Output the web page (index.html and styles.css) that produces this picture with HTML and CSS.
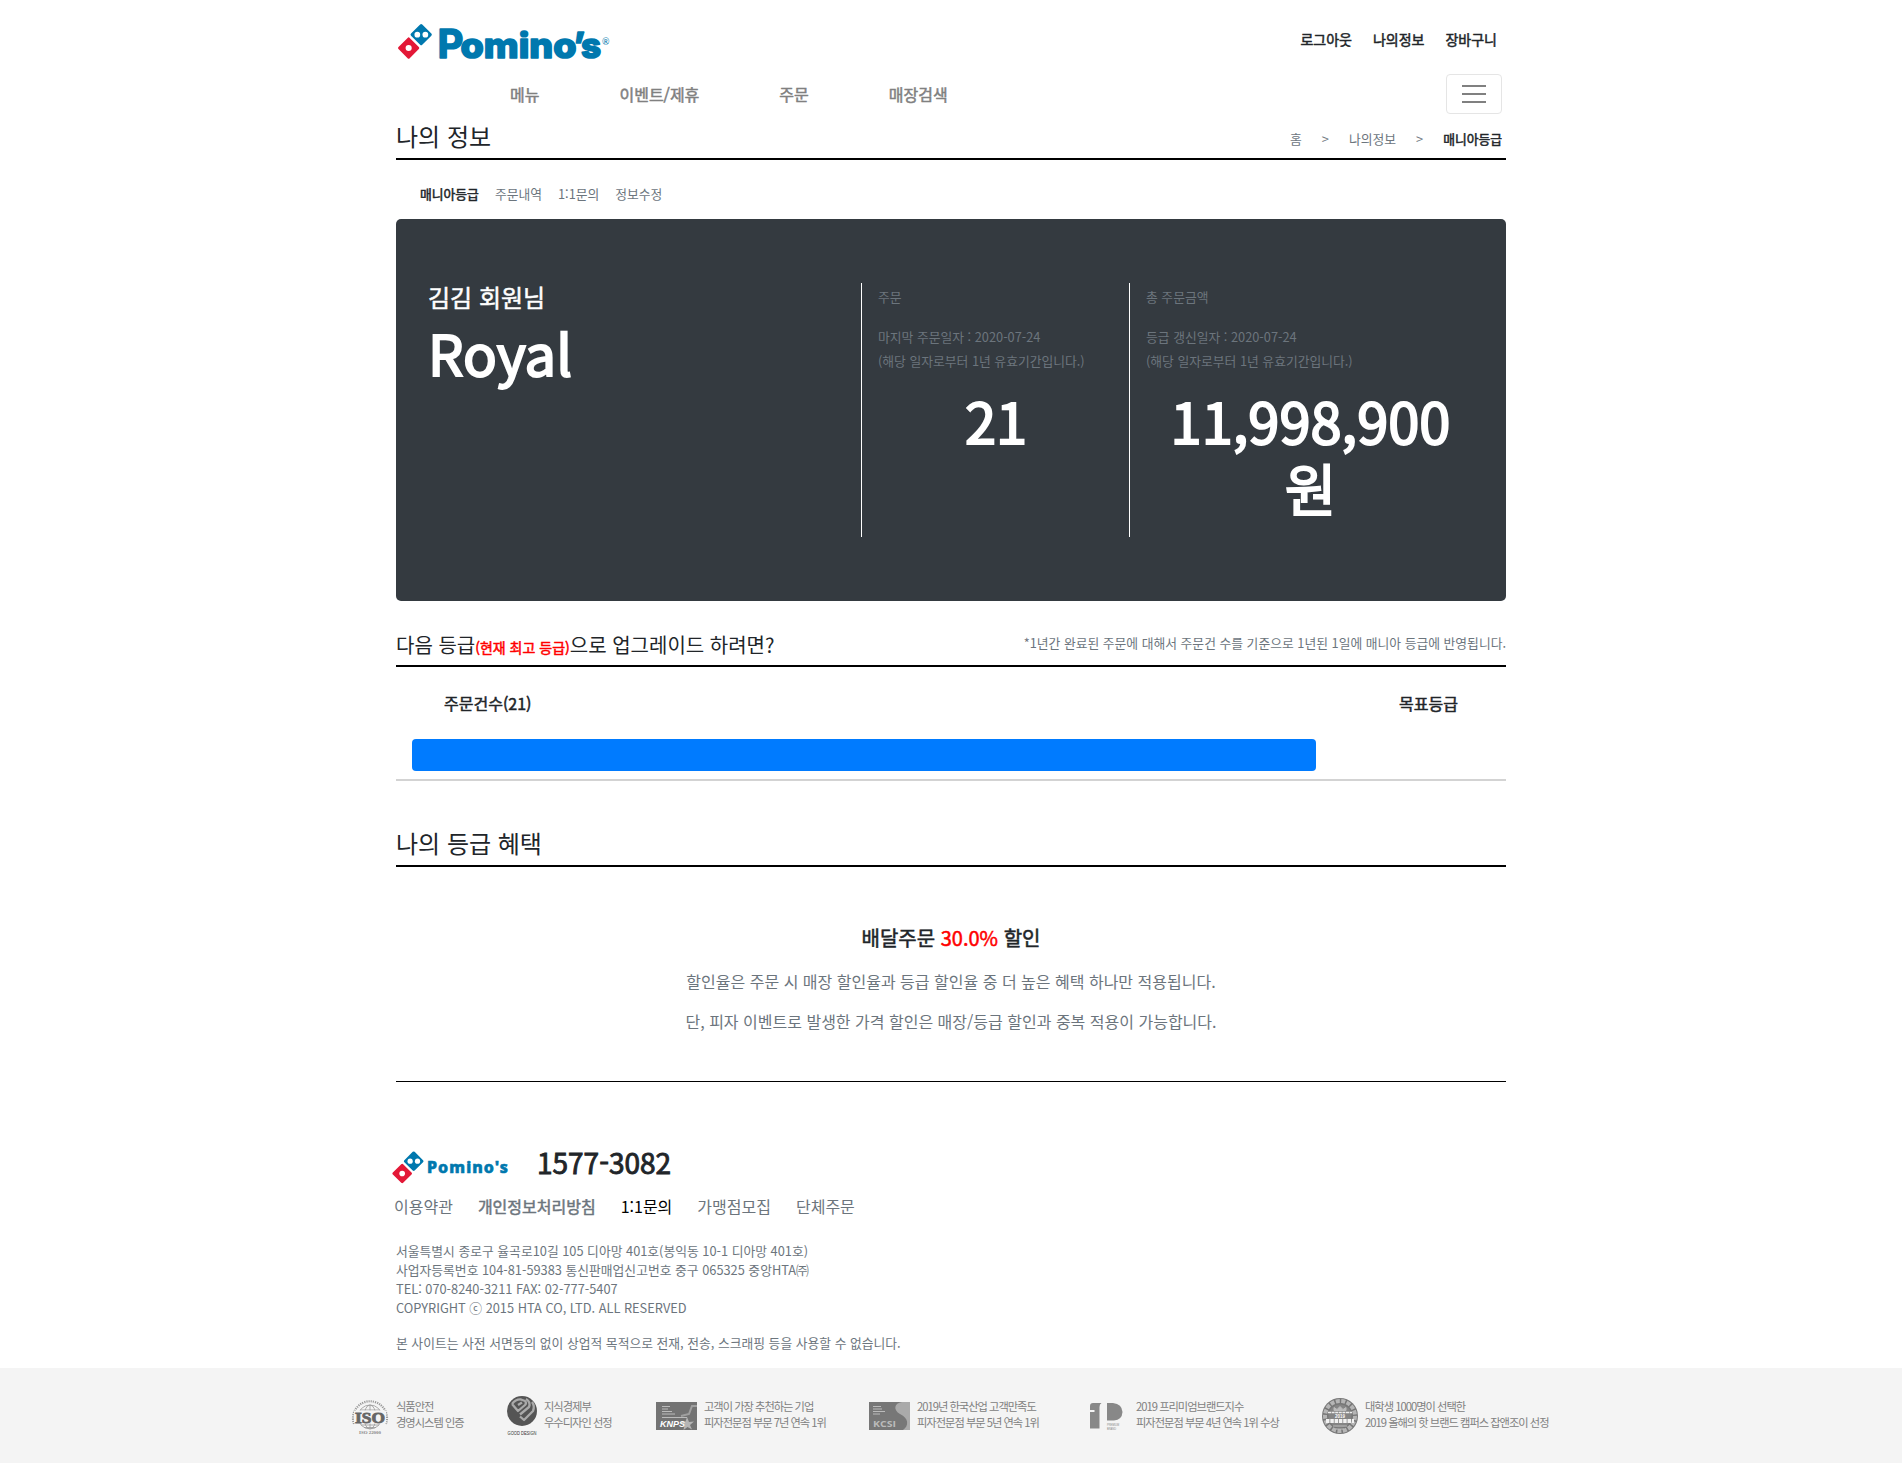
FILE: index.html
```html
<!DOCTYPE html>
<html lang="ko">
<head>
<meta charset="utf-8">
<title>나의 정보</title>
<link rel="stylesheet" href="styles.css">
</head>
<body>
<svg class="defs" width="0" height="0" aria-hidden="true">
  <symbol id="domino" viewBox="0 0 34 35">
    <g transform="rotate(45 23 11)"><rect x="15.4" y="3.600" width="15" height="15" rx="1.4" fill="#0078ae"/></g>
    <circle cx="19.2" cy="11" r="2.7" fill="#fff"/><circle cx="26.8" cy="11" r="2.7" fill="#fff"/>
    <g transform="rotate(45 11 23.7)"><rect x="3.5" y="16.2" width="15" height="15" rx="1.4" fill="#e31837"/></g>
    <circle cx="11" cy="23.7" r="2.9" fill="#fff"/>
  </symbol>
</svg>
<div class="container">
  <header class="top">
    <svg class="logo" width="220" height="50" viewBox="0 0 220 50">
      <use href="#domino" x="0" y="1" width="36" height="37"/>
      <text class="logo-text" y="36"><tspan class="logo-p" x="40.500">P</tspan><tspan x="63.500" textLength="116" lengthAdjust="spacingAndGlyphs">omino</tspan><tspan x="176.500">’</tspan><tspan x="184">s</tspan></text>
      <text class="logo-r" x="205" y="22.500">®</text>
    </svg>
    <nav class="user-links"><a>로그아웃</a><a>나의정보</a><a>장바구니</a></nav>
  </header>
  <div class="navbar">
    <nav class="main-nav"><a>메뉴</a><a>이벤트/제휴</a><a>주문</a><a>매장검색</a></nav>
    <button class="toggler" type="button" aria-label="메뉴 열기"><i></i><i></i><i></i></button>
  </div>
  <div class="page-title">
    <h1>나의 정보</h1>
    <div class="crumbs"><span>홈</span><span>&gt;</span><span>나의정보</span><span>&gt;</span><b>매니아등급</b></div>
  </div>
  <nav class="tabs"><b>매니아등급</b><a>주문내역</a><a>1:1문의</a><a>정보수정</a></nav>

  <section class="card">
    <div class="member"><p class="name">김김 회원님</p><p class="big">Royal</p></div>
    <div class="stat orders">
      <p class="label">주문</p>
      <p>마지막 주문일자 : 2020-07-24<br>(해당 일자로부터 1년 유효기간입니다.)</p>
      <p class="big">21</p>
    </div>
    <div class="stat amount">
      <p class="label">총 주문금액</p>
      <p>등급 갱신일자 : 2020-07-24<br>(해당 일자로부터 1년 유효기간입니다.)</p>
      <p class="big">11,998,900<br>원</p>
    </div>
  </section>

  <div class="upgrade">
    <h2>다음 등급<strong>(현재 최고 등급)</strong>으로 업그레이드 하려면?</h2>
    <span>*1년간 완료된 주문에 대해서 주문건 수를 기준으로 1년된 1일에 매니아 등급에 반영됩니다.</span>
  </div>
  <div class="goal">
    <div class="goal-head"><b>주문건수(21)</b><b>목표등급</b></div>
    <div class="progress"></div>
  </div>

  <h2 class="benefit-title">나의 등급 혜택</h2>
  <section class="benefit">
    <h3>배달주문 <em>30.0%</em> 할인</h3>
    <p>할인율은 주문 시 매장 할인율과 등급 할인율 중 더 높은 혜택 하나만 적용됩니다.</p>
    <p>단, 피자 이벤트로 발생한 가격 할인은 매장/등급 할인과 중복 적용이 가능합니다.</p>
  </section>

  <footer class="footer">
    <div class="contact">
      <svg class="foot-logo" width="120" height="34" viewBox="0 0 120 34">
        <use href="#domino" x="-.5" y="-.5" width="33" height="34"/>
        <text class="foot-logo-text" x="35" y="22" textLength="81" lengthAdjust="spacing">Pomino's</text>
      </svg>
      <span class="phone">1577-3082</span>
    </div>
    <nav class="policies"><a>이용약관</a><b>개인정보처리방침</b><a class="dark">1:1문의</a><a>가맹점모집</a><a>단체주문</a></nav>
    <address>서울특별시 종로구 율곡로10길 105 디아망 401호(봉익동 10-1 디아망 401호)<br>사업자등록번호 104-81-59383 통신판매업신고번호 중구 065325 중앙HTA㈜<br>TEL: 070-8240-3211 FAX: 02-777-5407<br>COPYRIGHT ⓒ 2015 HTA CO, LTD. ALL RESERVED</address>
    <p class="notice">본 사이트는 사전 서면동의 없이 상업적 목적으로 전재, 전송, 스크래핑 등을 사용할 수 없습니다.</p>
  </footer>
</div>

<div class="awards">
  <div class="award a1">
    <svg width="38" height="40" viewBox="0 0 38 40">
      <g fill="none" stroke="#999">
        <path d="M3 28A17 17 0 1 1 35 28" stroke-width="2.2" stroke-dasharray="1.2 1"/>
        <circle cx="19" cy="21" r="12" stroke-width=".8"/><ellipse cx="19" cy="21" rx="6" ry="12" stroke-width=".8"/>
        <path d="M19 9v25M9 14h20M10 29h18M13 31.500h12" stroke-width=".8"/>
      </g>
      <rect x="3" y="14.5" width="32" height="13" fill="#f4f4f4"/>
      <text class="iso" x="4" y="26.500" textLength="30" lengthAdjust="spacingAndGlyphs">ISO</text>
      <rect x="6" y="33.500" width="26" height="6.500" fill="#f4f4f4"/>
      <text class="iso-sub" x="8" y="38" textLength="22" lengthAdjust="spacingAndGlyphs">ISO 22000</text>
    </svg>
    <p>식품안전<br>경영시스템 인증</p>
  </div>
  <div class="award a2">
    <svg width="30" height="42" viewBox="0 0 30 42">
      <circle cx="15" cy="16" r="15" fill="#555"/>
      <g fill="none" stroke="#aaa" stroke-width="2.3" stroke-linejoin="round">
        <path d="M5 9L11 16L18 10Q20 8 18 6L14 4.500Q9 4 5 9"/>
        <path d="M11 10L15 7.500"/>
        <path d="M19 4Q24 7 22 12L13 19.500"/>
        <path d="M25 7Q28 11 26 16L17 25L13 21.500"/>
      </g>
      <text class="gd" x=".5" y="40" textLength="29" lengthAdjust="spacingAndGlyphs">GOOD DESIGN</text>
    </svg>
    <p>지식경제부<br>우수디자인 선정</p>
  </div>
  <div class="award a3">
    <svg width="41" height="28" viewBox="0 0 41 28">
      <rect width="41" height="28" fill="#737373"/>
      <path d="M6 4.5h8M6 7h6M6 9.500h10M6 12h13M6 15.500h25" stroke="#bbb" stroke-width="1"/>
      <path d="M25 14L33 12L36 4H41" fill="none" stroke="#a0a0a0" stroke-width="2"/>
      <path d="M31 15l2 5 5-.5-4 3.500 2 4.500-4.500-2.500-4 3 1-5-4-3 5-.5z" fill="#b5b5b5"/>
      <text class="knps" x="4" y="25" textLength="25" lengthAdjust="spacingAndGlyphs">KNPS</text>
    </svg>
    <p>고객이 가장 추천하는 기업<br>피자전문점 부문 7년 연속 1위</p>
  </div>
  <div class="award a4">
    <svg width="41" height="28" viewBox="0 0 41 28">
      <rect width="41" height="28" fill="#777"/>
      <path d="M41 0H33C25 1 24 8 31 12C40 16 40 24 34 28H41Z" fill="#aaa"/>
      <path d="M4 4.500h8M4 7h9M4 9.500h12M4 12h7" stroke="#bbb" stroke-width="1.200"/>
      <text class="kcsi" x="4" y="25" textLength="23" lengthAdjust="spacingAndGlyphs">KCSI</text>
    </svg>
    <p>2019년 한국산업 고객만족도<br>피자전문점 부문 5년 연속 1위</p>
  </div>
  <div class="award a5">
    <svg width="33" height="28" viewBox="0 0 33 28">
      <path d="M0 4Q0 1 3 1H11.500Q9.500 2 9.500 5V26.500H0V10H4.500V8H0Z" fill="#888"/>
      <path d="M17 1H23Q32 2 32.500 10Q32 18 24 18.500H17Z" fill="#888"/>
      <text class="pb" x="17" y="23.500" textLength="12" lengthAdjust="spacingAndGlyphs">PREMIUM</text>
      <text class="pb" x="17" y="27.500" textLength="9" lengthAdjust="spacingAndGlyphs">BRAND</text>
    </svg>
    <p>2019 프리미엄브랜드지수<br>피자전문점 부문 4년 연속 1위 수상</p>
  </div>
  <div class="award a6">
    <svg width="36" height="36" viewBox="0 0 36 36">
      <circle cx="18" cy="18" r="18" fill="#777"/>
      <circle cx="18" cy="18" r="15" fill="none" stroke="#b5b5b5" stroke-width="4" stroke-dasharray="4 1.500"/>
      <circle cx="18" cy="18" r="11.500" fill="#858585"/>
      <path d="M12 9.500l3 2 3-3 3 3 3-2v3H12zM11 28h14M14 31h8" fill="#bbb" stroke="#bbb"/>
      <path d="M6 14.500H30" stroke="#eee" stroke-width="1.600" stroke-dasharray="3 .6"/>
      <path d="M4 23H32" stroke="#f2f2f2" stroke-width="4" stroke-dasharray="3.500 .8"/>
      <text class="badge" x="13" y="20" textLength="10" lengthAdjust="spacingAndGlyphs">2019</text>
    </svg>
    <p>대학생 1000명이 선택한<br>2019 올해의 핫 브랜드 캠퍼스 잡앤조이 선정</p>
  </div>
</div>
</body>
</html>
```
FILE: styles.css
```css
* { box-sizing: border-box; }
body, h1, h2, h3, p { margin: 0; }
body {
  background: #fff;
  color: #212529;
  font-family: "Noto Sans CJK KR", sans-serif;
  font-size: 16px;
  line-height: 24px;
  white-space: nowrap;
}
/* Emphasis keeps the regular face's widths and thickens its strokes. */
b, strong, h3, .user-links, .main-nav, .name { font-weight: 400; -webkit-text-stroke: .5px currentColor; }
.defs { display: block; }
.container { width: 1110px; height: 1368px; margin: 0 auto; }

.top { height: 72px; display: flex; justify-content: space-between; }
.logo { margin: 22px 0 0 1px; }
.logo-text { font-family: Inter, sans-serif; font-weight: 800; font-size: 35px; fill: #0078ae; stroke: #0078ae; stroke-width: 1.6; stroke-linejoin: round; }
.logo-p { font-size: 40px; font-weight: 700; }
.logo-r { font-family: Lato, sans-serif; font-size: 9px; fill: #0078ae; }
.user-links { display: flex; gap: 21px; padding: 27px 9px 0 0; font-size: 14px; }

.navbar { height: 45px; display: flex; justify-content: space-between; }
.main-nav { display: flex; gap: 80px; padding: 10px 0 0 114px; color: #808080; }
.toggler {
  width: 56px; height: 40px; margin: 2px 4px 0 0; padding: 0;
  display: flex; flex-direction: column; align-items: center; justify-content: center; gap: 6px;
  background: none; border: 1px solid #e5e5e5; border-radius: 4px;
}
.toggler i { width: 24px; height: 2px; background: #808080; }

.page-title { height: 43px; display: flex; justify-content: space-between; border-bottom: 2px solid #000; }
.page-title h1, .benefit-title { font-size: 24px; font-weight: 400; line-height: 38px; }
.crumbs { display: flex; gap: 20px; padding: 10px 4px 0 0; font-size: 12.8px; color: #6c757d; }
.crumbs b, .tabs b { color: #212529; }
.tabs { height: 59px; display: flex; gap: 16px; padding: 22px 0 0 24px; font-size: 12.8px; color: #6c757d; }

.card { height: 382px; display: flex; padding: 64px 16px; border-radius: 5px; background: #343a40; color: #fff; }
.member { width: 449px; padding-left: 16px; }
.name { font-size: 24px; line-height: 28px; }
.big { font-size: 56px; line-height: 67px; -webkit-text-stroke: 2px currentColor; }
.member .big { padding-top: 7px; }
.stat { border-left: 1px solid #fff; padding: 2px 15px 0 16px; font-size: 12.8px; color: #6c757d; }
.stat .label { margin-bottom: 16px; }
.stat .big { margin-top: 13px; text-align: center; color: #fff; }
.orders { width: 268px; }
.amount { width: 361px; }

.upgrade { height: 66px; display: flex; justify-content: space-between; padding-top: 29px; border-bottom: 2px solid #000; }
.upgrade h2 { font-size: 20px; font-weight: 400; line-height: 30px; }
.upgrade strong { font-size: 14px; color: #f00; }
.upgrade span { padding-top: 1px; font-size: 12.8px; color: #6c757d; }
.goal { height: 114px; padding: 24px 16px 0; border-bottom: 2px solid #d3d3d3; }
.goal-head { height: 48px; display: flex; justify-content: space-between; padding: 0 32px; }
.progress { width: 904px; height: 32px; border-radius: 4px; background: #007bff; }

.benefit-title { height: 86px; padding-top: 43px; border-bottom: 2px solid #000; }
.benefit { height: 215px; padding-top: 56px; text-align: center; border-bottom: 1px solid #000; color: #6c757d; }
.benefit h3 { font-size: 20px; line-height: 30px; color: #212529; margin-bottom: 16px; }
.benefit em { font-style: normal; color: #f00; }
.benefit p { margin-bottom: 16px; }

.contact { display: flex; margin: 60px 0 0 -4px; height: 52px; }
.foot-logo { margin-top: 9px; }
.foot-logo-text { font-family: "Noto Sans", sans-serif; font-size: 16px; font-weight: 800; fill: #0078ae; stroke: #0078ae; stroke-width: .6; }
.phone { margin-left: 25px; font-size: 28px; line-height: 41px; -webkit-text-stroke: .9px currentColor; }
.policies { display: flex; gap: 25px; margin-left: -2px; color: #6c757d; }
.policies .dark { color: #000; }
address { margin-top: 23px; font-style: normal; font-size: 12.8px; line-height: 19px; color: #6c757d; }
.notice { margin-top: 14px; font-size: 12.8px; color: #6c757d; }

.awards { height: 95px; display: flex; align-items: center; padding-left: 351px; background: #f4f4f4; }
.award { display: flex; align-items: center; gap: 7px; }
.award svg { flex: none; }
.award p { padding-bottom: 3px; font-size: 11.25px; line-height: 16px; letter-spacing: -1px; color: #808080; }
.a1 { width: 156px; } .a2 { width: 149px; } .a3 { width: 213px; }
.a4 { width: 221px; } .a5 { width: 232px; }
.a5 p { margin-left: 6px; }
.iso { font: 700 15px "Liberation Serif", serif; fill: #666; stroke: #666; stroke-width: .8; }
.iso-sub { font: 700 5px "Liberation Serif", serif; fill: #888; }
.gd { font: 5px "Liberation Sans", sans-serif; fill: #333; }
.knps { font: italic 700 9px "Liberation Sans", sans-serif; fill: #fff; }
.kcsi { font: 700 9px "Open Sans", sans-serif; fill: #bbb; }
.pb { font: 3.5px "Liberation Sans", sans-serif; fill: #888; }
.badge { font: 700 5px "Liberation Sans", sans-serif; fill: #fff; }
```
